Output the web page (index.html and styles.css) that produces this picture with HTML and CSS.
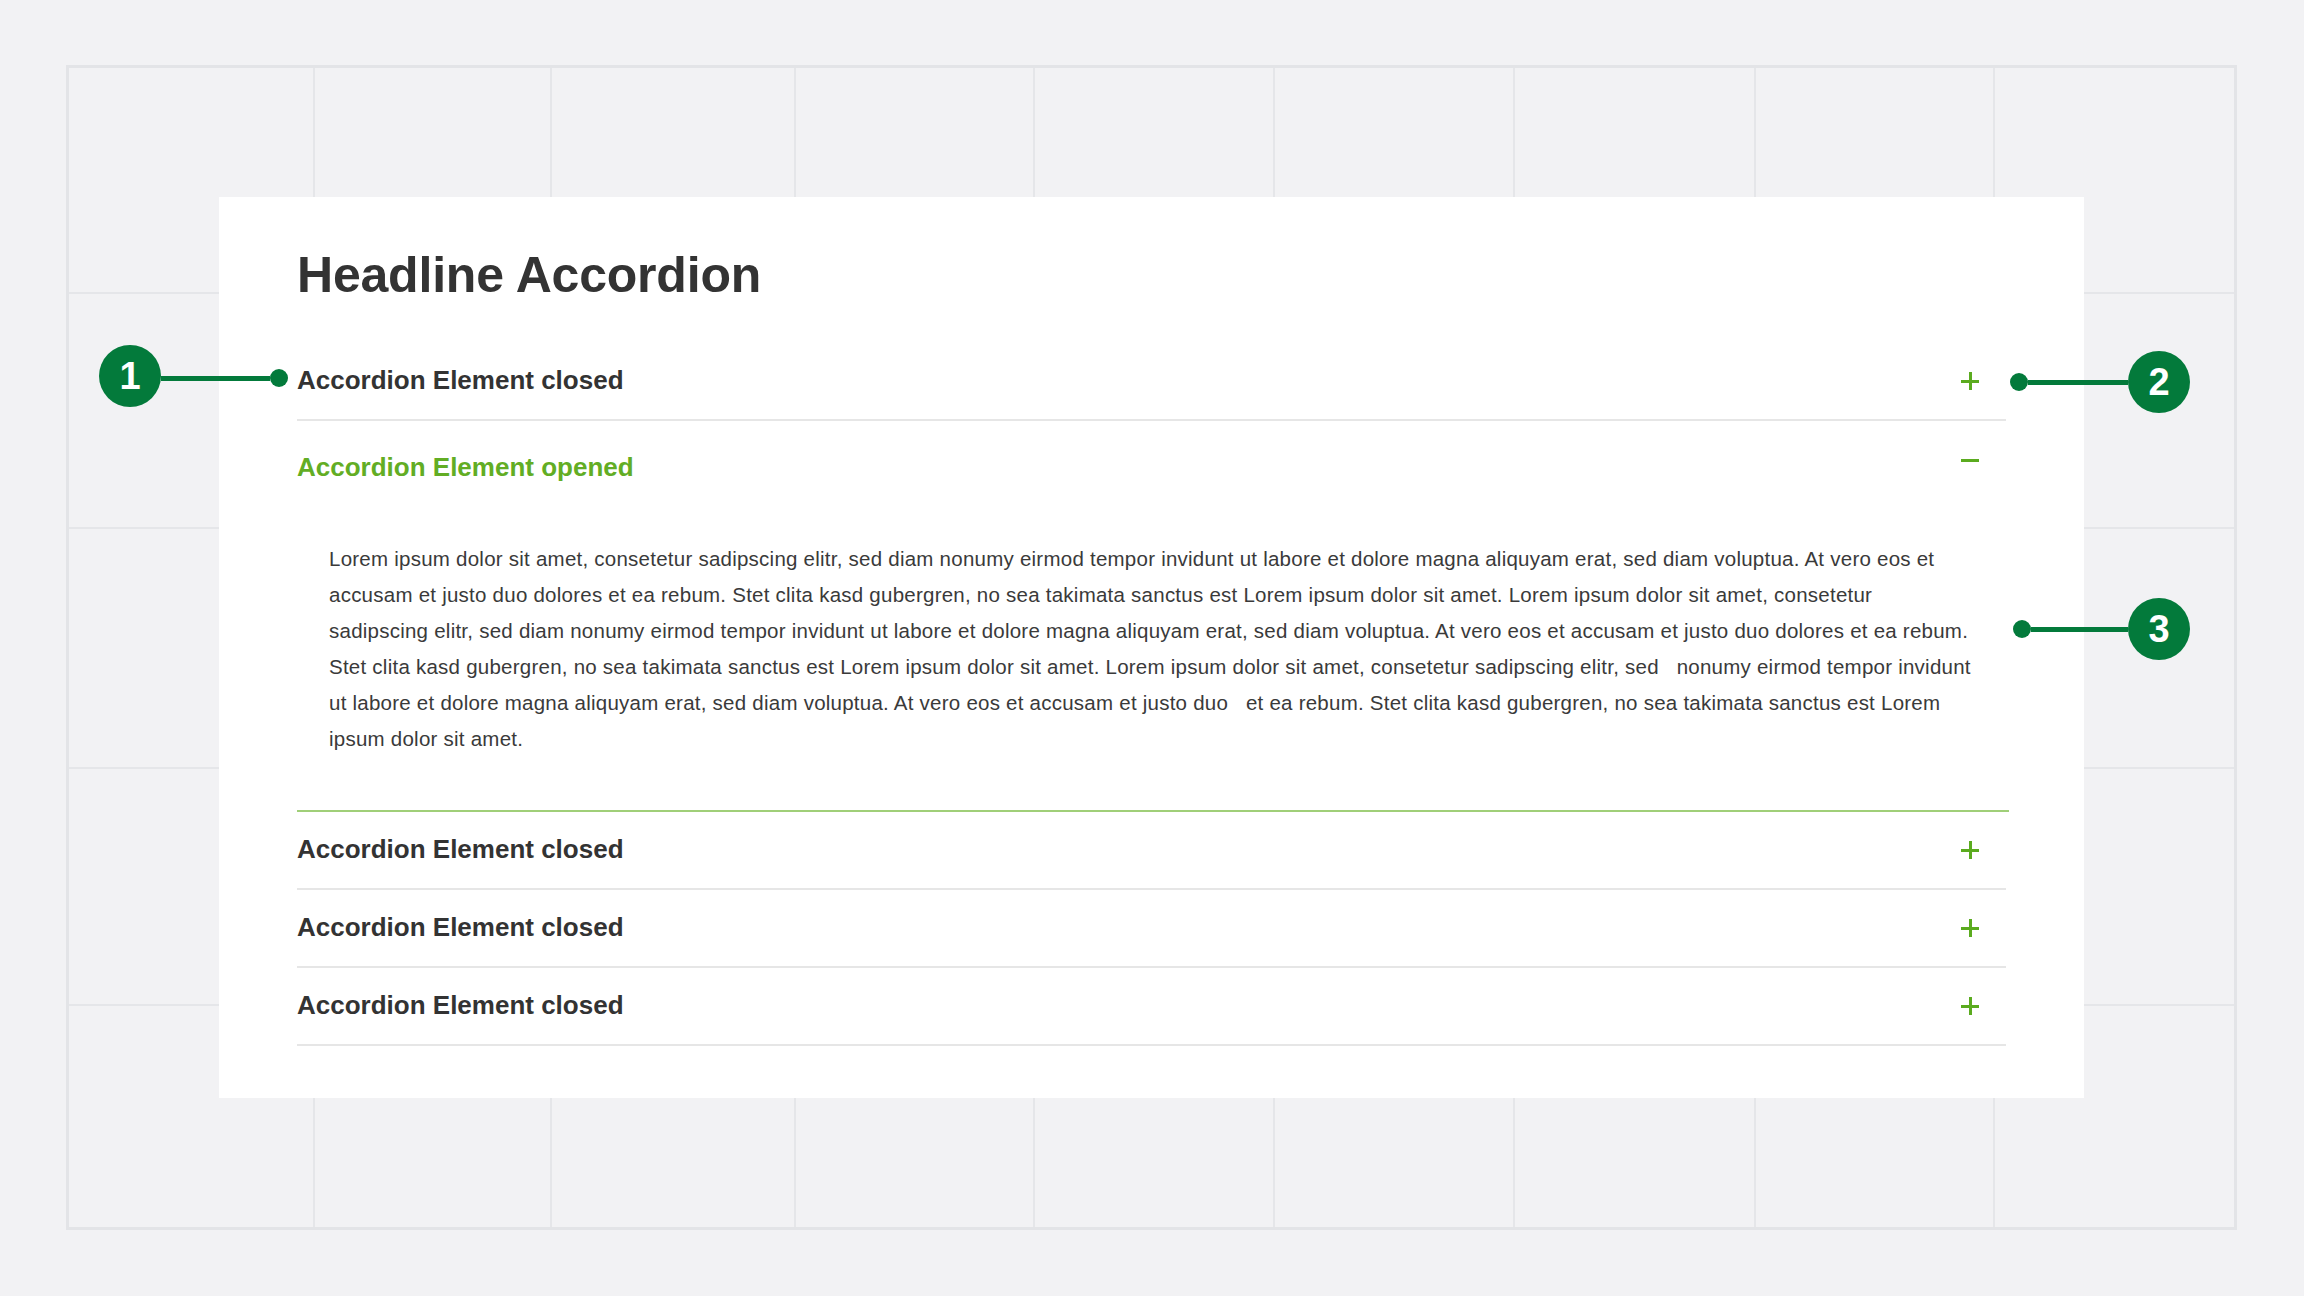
FILE: index.html
```html
<!DOCTYPE html>
<html lang="en">
<head>
<meta charset="utf-8">
<title>Headline Accordion</title>
<link rel="stylesheet" href="styles.css">
</head>
<body>
<div class="stage">
  <div class="grid">
    <div></div><div></div><div></div><div></div><div></div><div></div><div></div><div></div><div></div>
    <div></div><div></div><div></div><div></div><div></div><div></div><div></div><div></div><div></div>
    <div></div><div></div><div></div><div></div><div></div><div></div><div></div><div></div><div></div>
    <div></div><div></div><div></div><div></div><div></div><div></div><div></div><div></div><div></div>
    <div></div><div></div><div></div><div></div><div></div><div></div><div></div><div></div><div></div>
  </div>

  <section class="card">
    <h1 class="headline">Headline Accordion</h1>
    <div class="accordion">
      <div class="item">
        <div class="item-head">
          <span class="item-title">Accordion Element closed</span>
          <span class="icon icon-plus"></span>
        </div>
      </div>
      <div class="item item-open">
        <div class="item-head">
          <span class="item-title">Accordion Element opened</span>
          <span class="icon icon-minus"></span>
        </div>
        <p class="item-body">Lorem ipsum dolor sit amet, consetetur sadipscing elitr, sed diam nonumy eirmod tempor invidunt ut labore et dolore magna aliquyam erat, sed diam voluptua. At vero eos et<br>accusam et justo duo dolores et ea rebum. Stet clita kasd gubergren, no sea takimata sanctus est Lorem ipsum dolor sit amet. Lorem ipsum dolor sit amet, consetetur<br>sadipscing elitr, sed diam nonumy eirmod tempor invidunt ut labore et dolore magna aliquyam erat, sed diam voluptua. At vero eos et accusam et justo duo dolores et ea rebum.<br>Stet clita kasd gubergren, no sea takimata sanctus est Lorem ipsum dolor sit amet. Lorem ipsum dolor sit amet, consetetur sadipscing elitr, sed &nbsp; nonumy eirmod tempor invidunt<br>ut labore et dolore magna aliquyam erat, sed diam voluptua. At vero eos et accusam et justo duo &nbsp; et ea rebum. Stet clita kasd gubergren, no sea takimata sanctus est Lorem<br>ipsum dolor sit amet.</p>
      </div>
      <div class="item">
        <div class="item-head">
          <span class="item-title">Accordion Element closed</span>
          <span class="icon icon-plus"></span>
        </div>
      </div>
      <div class="item">
        <div class="item-head">
          <span class="item-title">Accordion Element closed</span>
          <span class="icon icon-plus"></span>
        </div>
      </div>
      <div class="item">
        <div class="item-head">
          <span class="item-title">Accordion Element closed</span>
          <span class="icon icon-plus"></span>
        </div>
      </div>
    </div>
  </section>

  <div class="callout callout-1">
    <span class="badge">1</span><span class="leader leader-1"></span><span class="dot"></span>
  </div>
  <div class="callout callout-2">
    <span class="dot"></span><span class="leader leader-2"></span><span class="badge">2</span>
  </div>
  <div class="callout callout-3">
    <span class="dot"></span><span class="leader leader-3"></span><span class="badge">3</span>
  </div>
</div>
</body>
</html>
```

FILE: styles.css
```css
html, body {
  margin: 0;
  padding: 0;
}

body {
  background: #f2f2f4;
  font-family: "Liberation Sans", Arial, Helvetica, sans-serif;
  color: #333333;
}

.stage {
  position: relative;
  width: 2304px;
  height: 1296px;
  overflow: hidden;
}

/* background layout grid */
.grid {
  margin: 65px 0 0 66px;
  width: 2171px;
  height: 1165px;
  box-sizing: border-box;
  border: 3px solid #e3e4e7;
  background: #e5e6e9;
  display: grid;
  grid-template-columns: 244px 235px 242px 237px 238px 238px 239px 237px 239px;
  grid-template-rows: 224px 233px 238px 235px 221px;
  gap: 2px;
}

.grid > div {
  background: #f2f2f4;
}

/* white card */
.card {
  position: absolute;
  left: 219px;
  top: 197px;
  width: 1865px;
  box-sizing: border-box;
  padding: 48px 78px 52px 78px;
  background: #ffffff;
}

.headline {
  margin: 0 0 38px 0;
  font-size: 50px;
  line-height: 60px;
  font-weight: bold;
  color: #333333;
  letter-spacing: -0.2px;
}

.item {
  border-bottom: 2px solid #e6e6e6;
}

.item-head {
  display: flex;
  justify-content: space-between;
  align-items: flex-start;
  padding: 22px 0 24px 0;
}

.item-title {
  font-size: 26px;
  line-height: 30px;
  font-weight: bold;
  color: #333333;
}

.item-open {
  border-bottom-color: #a0cf78;
  margin-right: -3px;
}

.item-open .item-head {
  padding-bottom: 0;
  padding-right: 3px;
}

.item-open .item-title {
  margin-top: 9px;
  color: #62ad24;
}

.item-body {
  margin: 59px 0 0 32px;
  padding-bottom: 53px;
  font-size: 20.5px;
  line-height: 36px;
  letter-spacing: 0.24px;
  color: #3a3a3a;
  white-space: nowrap;
}

/* plus / minus icons */
.icon {
  position: relative;
  flex: none;
  width: 18px;
  height: 18px;
  margin: 7px 27px 0 0;
}

.icon::before,
.icon::after {
  content: "";
  position: absolute;
  background: #5bab1f;
}

.icon::before {
  left: 0;
  top: 7.5px;
  width: 18px;
  height: 3px;
}

.icon-plus::after {
  left: 7.5px;
  top: 0;
  width: 3px;
  height: 18px;
}

.icon-minus {
  margin-top: 8px;
}

.icon-minus::after {
  display: none;
}

/* numbered callouts */
.callout {
  position: absolute;
  display: flex;
  align-items: center;
}

.callout-1 {
  left: 99px;
  top: 345px;
}

.callout-2 {
  left: 2010px;
  top: 351px;
}

.callout-3 {
  left: 2013px;
  top: 598px;
}

.badge {
  width: 62px;
  height: 62px;
  border-radius: 50%;
  background: #037a3b;
  color: #ffffff;
  font-size: 38px;
  font-weight: bold;
  line-height: 62px;
  text-align: center;
}

.leader {
  height: 5px;
  background: #037a3b;
}

.leader-1 {
  width: 109px;
  margin-top: 5px;
}

.leader-2 {
  width: 100px;
}

.leader-3 {
  width: 97px;
}

.dot {
  width: 18px;
  height: 18px;
  border-radius: 50%;
  background: #037a3b;
}

.callout-1 .dot {
  margin-top: 4px;
}
```
